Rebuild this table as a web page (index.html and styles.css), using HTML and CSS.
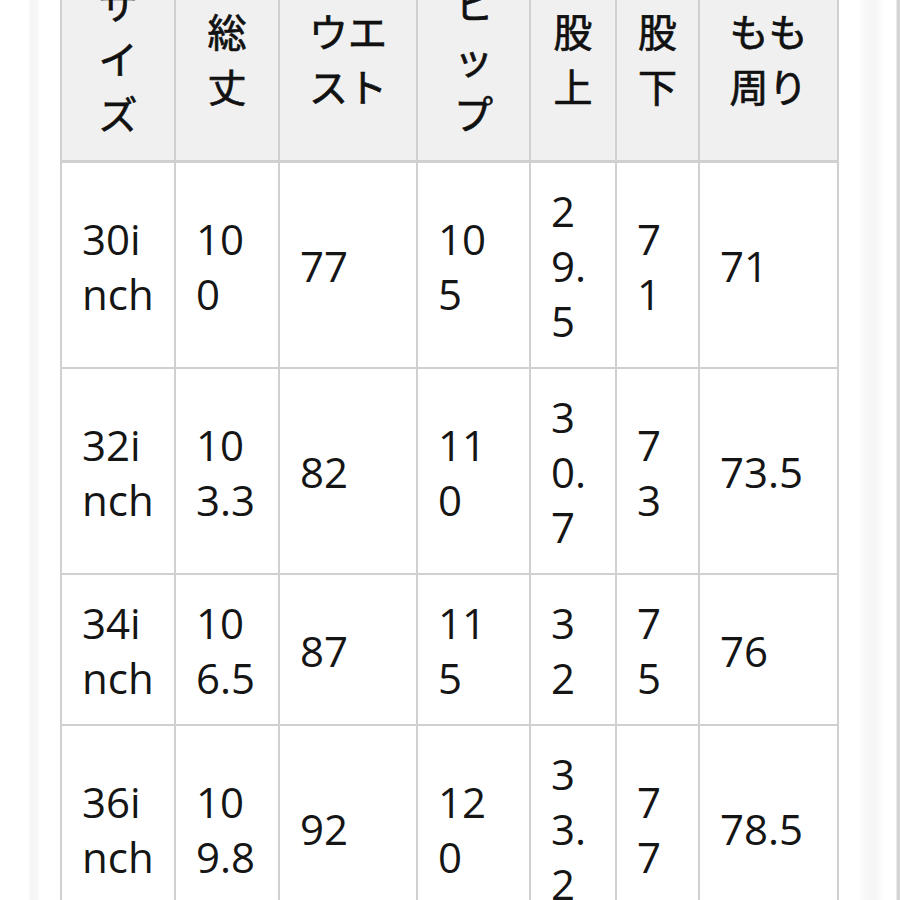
FILE: index.html
```html
<!DOCTYPE html>
<html lang="ja">
<head>
<meta charset="utf-8">
<title>サイズ表</title>
<link rel="stylesheet" href="styles.css">
</head>
<body>
<div class="page">
  <table class="size-table">
    <colgroup>
      <col class="c1"><col class="c2"><col class="c3"><col class="c4"><col class="c5"><col class="c6"><col class="c7">
    </colgroup>
    <thead>
      <tr>
        <th>サイズ</th>
        <th>総丈</th>
        <th>ウエスト</th>
        <th>ヒップ</th>
        <th>股上</th>
        <th>股下</th>
        <th>もも周り</th>
      </tr>
    </thead>
    <tbody>
      <tr><td>30inch</td><td>100</td><td>77</td><td>105</td><td>29.5</td><td>71</td><td>71</td></tr>
      <tr><td>32inch</td><td>103.3</td><td>82</td><td>110</td><td>30.7</td><td>73</td><td>73.5</td></tr>
      <tr><td>34inch</td><td>106.5</td><td>87</td><td>115</td><td>32</td><td>75</td><td>76</td></tr>
      <tr><td>36inch</td><td>109.8</td><td>92</td><td>120</td><td>33.2</td><td>77</td><td>78.5</td></tr>
    </tbody>
  </table>
</div>
</body>
</html>
```

FILE: styles.css
```css
html, body {
  margin: 0;
  padding: 0;
}
body {
  width: 900px;
  height: 900px;
  overflow: hidden;
  background:
    linear-gradient(to right,
      #ffffff 0px, #ffffff 28px,
      #f6f6f6 30px, #f6f6f6 37px,
      #ffffff 40px, #ffffff 858px,
      #f7f7f7 866px, #f6f6f6 876px,
      #ffffff 884px, #ffffff 896px,
      #d4d4d4 897px, #d4d4d4 900px);
  font-family: "Open Sans", "Noto Sans CJK JP", sans-serif;
  color: #151515;
}
.page {
  padding-left: 60px;
}
.size-table {
  margin-top: -47px;
  border-collapse: collapse;
  table-layout: fixed;
  width: 779px;
  background: #ffffff;
}
.c1 { width: 114px; }
.c2 { width: 104px; }
.c3 { width: 138px; }
.c4 { width: 113px; }
.c5 { width: 86px; }
.c6 { width: 83px; }
.c7 { width: 139px; }

.size-table th,
.size-table td {
  border: 2px solid #d0d0d0;
  vertical-align: middle;
  line-height: 55px;
  word-break: break-all;
  overflow-wrap: anywhere;
}
.size-table th {
  background: #f0f0f0;
  font-family: "Noto Sans CJK JP", sans-serif;
  font-weight: 400;
  -webkit-text-stroke: 0.7px #111111;
  font-size: 39px;
  color: #111111;
  text-align: center;
  padding: 20px 21px;
  border-bottom-width: 3px;
}
.size-table td {
  font-size: 42px;
  font-weight: 400;
  text-align: left;
  padding: 20px 20px 19px;
}
```
